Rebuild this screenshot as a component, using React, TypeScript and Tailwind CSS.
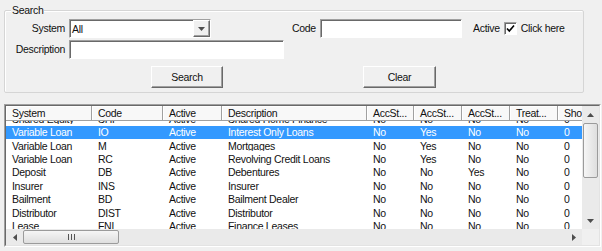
const cols = [
  { label: "System", cls: "w-[86px]" },
  { label: "Code", cls: "w-[71px]" },
  { label: "Active", cls: "w-[59px]" },
  { label: "Description", cls: "w-[145px]" },
  { label: "AccSt...", cls: "w-[47px]" },
  { label: "AccSt...", cls: "w-[48px]" },
  { label: "AccSt...", cls: "w-[48px]" },
  { label: "Treat...", cls: "w-[48px]" },
  { label: "Sho", cls: "w-[40px]" },
];

const rows = [
  ["Shared Equity", "SHF", "Active", "Shared Home Finance", "No", "No", "No", "No", "0"],
  ["Variable Loan", "IO", "Active", "Interest Only Loans", "No", "Yes", "No", "No", "0"],
  ["Variable Loan", "M", "Active", "Mortgages", "No", "Yes", "No", "No", "0"],
  ["Variable Loan", "RC", "Active", "Revolving Credit Loans", "No", "Yes", "No", "No", "0"],
  ["Deposit", "DB", "Active", "Debentures", "No", "No", "Yes", "No", "0"],
  ["Insurer", "INS", "Active", "Insurer", "No", "No", "No", "No", "0"],
  ["Bailment", "BD", "Active", "Bailment Dealer", "No", "No", "No", "No", "0"],
  ["Distributor", "DIST", "Active", "Distributor", "No", "No", "No", "No", "0"],
  ["Lease", "FNL", "Active", "Finance Leases", "No", "No", "No", "No", "0"],
];

const SELECTED = 1;

function Arrow({ dir }: { dir: "up" | "down" | "left" | "right" }) {
  const pts = {
    up: "0,4 7,4 3.5,0",
    down: "0,0 7,0 3.5,4",
    left: "4,0 4,7 0,3.5",
    right: "0,0 0,7 4,3.5",
  }[dir];
  const vertical = dir === "up" || dir === "down";
  return (
    <svg width={vertical ? 7 : 4} height={vertical ? 4 : 7} viewBox={vertical ? "0 0 7 4" : "0 0 4 7"}>
      <polygon points={pts} fill="#4d4d4d" />
    </svg>
  );
}

function Sunken({ className, children }: { className: string; children?: React.ReactNode }) {
  return (
    <div
      className={`border border-t-[#a0a0a0] border-l-[#a0a0a0] border-b-white border-r-white shadow-[inset_1px_1px_0_#696969] bg-white ${className}`}
    >
      {children}
    </div>
  );
}

function Btn({ className, children }: { className: string; children: React.ReactNode }) {
  return (
    <div
      className={`flex items-center justify-center border border-t-white border-l-white border-b-[#696969] border-r-[#696969] shadow-[inset_-1px_-1px_0_#a0a0a0] bg-[#f0f0f0] ${className}`}
    >
      {children}
    </div>
  );
}

export default function App() {
  return (
    <div className="w-[602px] h-[251px] overflow-hidden bg-[#f0f0f0] pt-[10px] pl-[4px] font-['Liberation_Sans',Arial,sans-serif] text-[10.5px] tracking-[-0.3px] leading-none text-[#111]">
      {/* Search group */}
      <div className="relative w-[580px] h-[83px] border border-[#d5d5d5] rounded-[2px] shadow-[inset_1px_1px_0_#fff]">
        <span className="absolute -top-[7px] left-[6px] bg-[#f0f0f0] px-[1px] leading-[13px]">Search</span>
        <div className="pt-[8px]">
          <div className="flex items-center h-[19px]">
            <span className="w-[60px] text-right">System</span>
            <Sunken className="ml-[4px] w-[142px] h-[19px] flex items-center">
              <span className="flex-1 pl-[2px] pt-[1px]">All</span>
              <Btn className="w-[17px] h-[17px]">
                <Arrow dir="down" />
              </Btn>
            </Sunken>
            <span className="ml-[81px] w-[24px]">Code</span>
            <Sunken className="ml-[4px] w-[142px] h-[19px]" />
            <span className="ml-[11px]">Active</span>
            <Sunken className="ml-[4px] w-[13px] h-[13px] flex items-center justify-center">
              <svg width="9" height="9" viewBox="0 0 9 9">
                <path d="M1 4.5 L3.3 7 L8 1.5" stroke="#000" strokeWidth="1.6" fill="none" />
              </svg>
            </Sunken>
            <span className="ml-[4px]">Click here</span>
          </div>
          <div className="flex items-center h-[19px] mt-[2px]">
            <span className="w-[60px] text-right">Description</span>
            <Sunken className="ml-[4px] w-[215px] h-[19px]" />
          </div>
          <div className="flex mt-[7px]">
            <Btn className="ml-[146px] w-[72px] h-[22px]">Search</Btn>
            <Btn className="ml-[140px] w-[73px] h-[22px]">Clear</Btn>
          </div>
        </div>
      </div>

      {/* List view */}
      <div className="mt-[11px] w-[597px] h-[143px] border border-t-[#a0a0a0] border-l-[#a0a0a0] border-b-white border-r-white">
        <div className="w-full h-full border border-t-[#696969] border-l-[#696969] border-b-[#e3e3e3] border-r-[#e3e3e3] bg-white flex">
          <div className="w-[576px] flex flex-col">
            <div className="h-[15px] flex overflow-hidden bg-[#f8f8f8]">
              {cols.map((c, i) => (
                <div
                  key={i}
                  className={`${c.cls} shrink-0 h-full flex items-center pl-[6px] border-r border-b border-r-[#a0a0a0] border-b-[#a0a0a0] shadow-[inset_1px_1px_0_#fff] whitespace-nowrap overflow-hidden`}
                >
                  {c.label}
                </div>
              ))}
            </div>
            <div className="flex-1 overflow-hidden">
              <div className="-mt-[8.6px]">
                {rows.map((r, i) => (
                  <div
                    key={i}
                    className={`flex h-[13.4px] items-center ${i === SELECTED ? "bg-[#3399ff] text-white" : ""}`}
                  >
                    {r.map((v, j) => (
                      <div key={j} className={`${cols[j].cls} shrink-0 pl-[6px] whitespace-nowrap overflow-hidden`}>
                        {v}
                      </div>
                    ))}
                  </div>
                ))}
              </div>
            </div>
            <div className="h-[16px] flex items-center bg-[#eaeaea]">
              <div className="w-[17px] h-full flex items-center justify-center">
                <Arrow dir="left" />
              </div>
              <div className="w-[96px] h-[14px] rounded-[2px] border border-[#9b9b9b] bg-gradient-to-b from-[#f6f6f6] to-[#dedede] flex items-center justify-center gap-[2px]">
                <span className="w-px h-[6px] bg-[#555]" />
                <span className="w-px h-[6px] bg-[#555]" />
                <span className="w-px h-[6px] bg-[#555]" />
              </div>
              <div className="flex-1" />
              <div className="w-[17px] h-full flex items-center justify-center">
                <Arrow dir="right" />
              </div>
            </div>
          </div>
          <div className="w-[17px] flex flex-col">
            <div className="flex-1 flex flex-col items-center bg-[#eaeaea]">
              <div className="h-[17px] w-full flex items-center justify-center">
                <Arrow dir="up" />
              </div>
              <div className="w-[15px] h-[55px] rounded-[2px] border border-[#9b9b9b] bg-gradient-to-r from-[#f6f6f6] to-[#dedede]" />
              <div className="flex-1" />
              <div className="h-[17px] w-full flex items-center justify-center">
                <Arrow dir="down" />
              </div>
            </div>
            <div className="h-[16px] bg-[#f0f0f0]" />
          </div>
        </div>
      </div>
    </div>
  );
}
